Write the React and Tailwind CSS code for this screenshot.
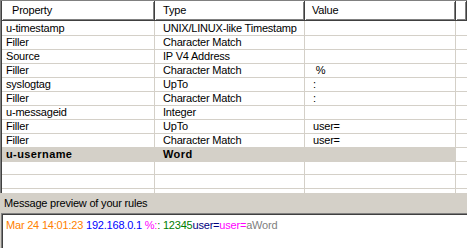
import React from "react";

const rows = [
  { prop: "u-timestamp", type: "UNIX/LINUX-like Timestamp", value: "" },
  { prop: "Filler", type: "Character Match", value: "" },
  { prop: "Source", type: "IP V4 Address", value: "" },
  { prop: "Filler", type: "Character Match", value: "\u00a0%" },
  { prop: "syslogtag", type: "UpTo", value: ":" },
  { prop: "Filler", type: "Character Match", value: ":" },
  { prop: "u-messageid", type: "Integer", value: "" },
  { prop: "Filler", type: "UpTo", value: "user=" },
  { prop: "Filler", type: "Character Match", value: "user=" },
  { prop: "u-username", type: "Word", value: "", selected: true },
  { prop: "", type: "", value: "" },
  { prop: "", type: "", value: "" },
  { prop: "", type: "", value: "" },
];

const headCell =
  "h-[20px] flex items-center border-r border-b border-[#404040] shadow-[inset_1px_1px_0_#ffffff,inset_-1px_-1px_0_#808080] whitespace-nowrap overflow-hidden";

const App = () => {
  return (
    <div className="w-[467px] h-[248px] bg-[#d4d0c8] overflow-hidden flex flex-col font-['Liberation_Sans',Arial,sans-serif] text-[11px] tracking-[-0.2px] text-black">
      {/* rule list */}
      <div className="border-t border-l border-[#808080]">
        <div className="border-l border-[#404040] bg-white">
          <div className="grid grid-cols-[153px_150px_151px_1fr]">
            <div className={`${headCell} pl-[10px]`}>Property</div>
            <div className={`${headCell} pl-[8px]`}>Type</div>
            <div className={`${headCell} pl-[7px]`}>Value</div>
            <div className={headCell}></div>
          </div>
          <div className="h-[172px] overflow-hidden">
            {rows.map((r, i) => (
              <div
                key={i}
                className={`grid grid-cols-[153px_150px_151px_1fr] h-[14px] leading-[14px] ${r.selected ? "font-bold tracking-[0.4px]" : ""}`}
              >
                <div className={`pl-[4px] border-r border-b border-[#d4d0c8] whitespace-nowrap ${r.selected ? "bg-[#d4d0c8]" : ""}`}>{r.prop}</div>
                <div className={`pl-[8px] border-r border-b border-[#d4d0c8] whitespace-nowrap ${r.selected ? "bg-[#d4d0c8]" : ""}`}>{r.type}</div>
                <div className={`pl-[8px] border-r border-b border-[#d4d0c8] whitespace-nowrap ${r.selected ? "bg-[#d4d0c8]" : ""}`}>{r.value}</div>
                <div className="border-b border-[#d4d0c8]"></div>
              </div>
            ))}
          </div>
        </div>
      </div>

      {/* preview */}
      <div className="h-[20px] flex items-center pl-[4px]">Message preview of your rules</div>
      <div className="flex-1 ml-[1px] border-t border-l border-[#808080]">
        <div className="h-full border-t border-l border-[#404040] bg-white pl-[3px] pt-[2px] whitespace-nowrap">
          <span className="text-[#ff8000]">Mar 24 14:01:23 </span>
          <span className="text-[#0000ff]">192.168.0.1 </span>
          <span className="text-[#ff00ff]">%:</span>
          <span className="text-[#008000]">: 12345</span>
          <span className="text-[#000080]">user=</span>
          <span className="text-[#ff00ff]">user=</span>
          <span className="text-[#808080]">aWord</span>
        </div>
      </div>
    </div>
  );
};

export default App;
